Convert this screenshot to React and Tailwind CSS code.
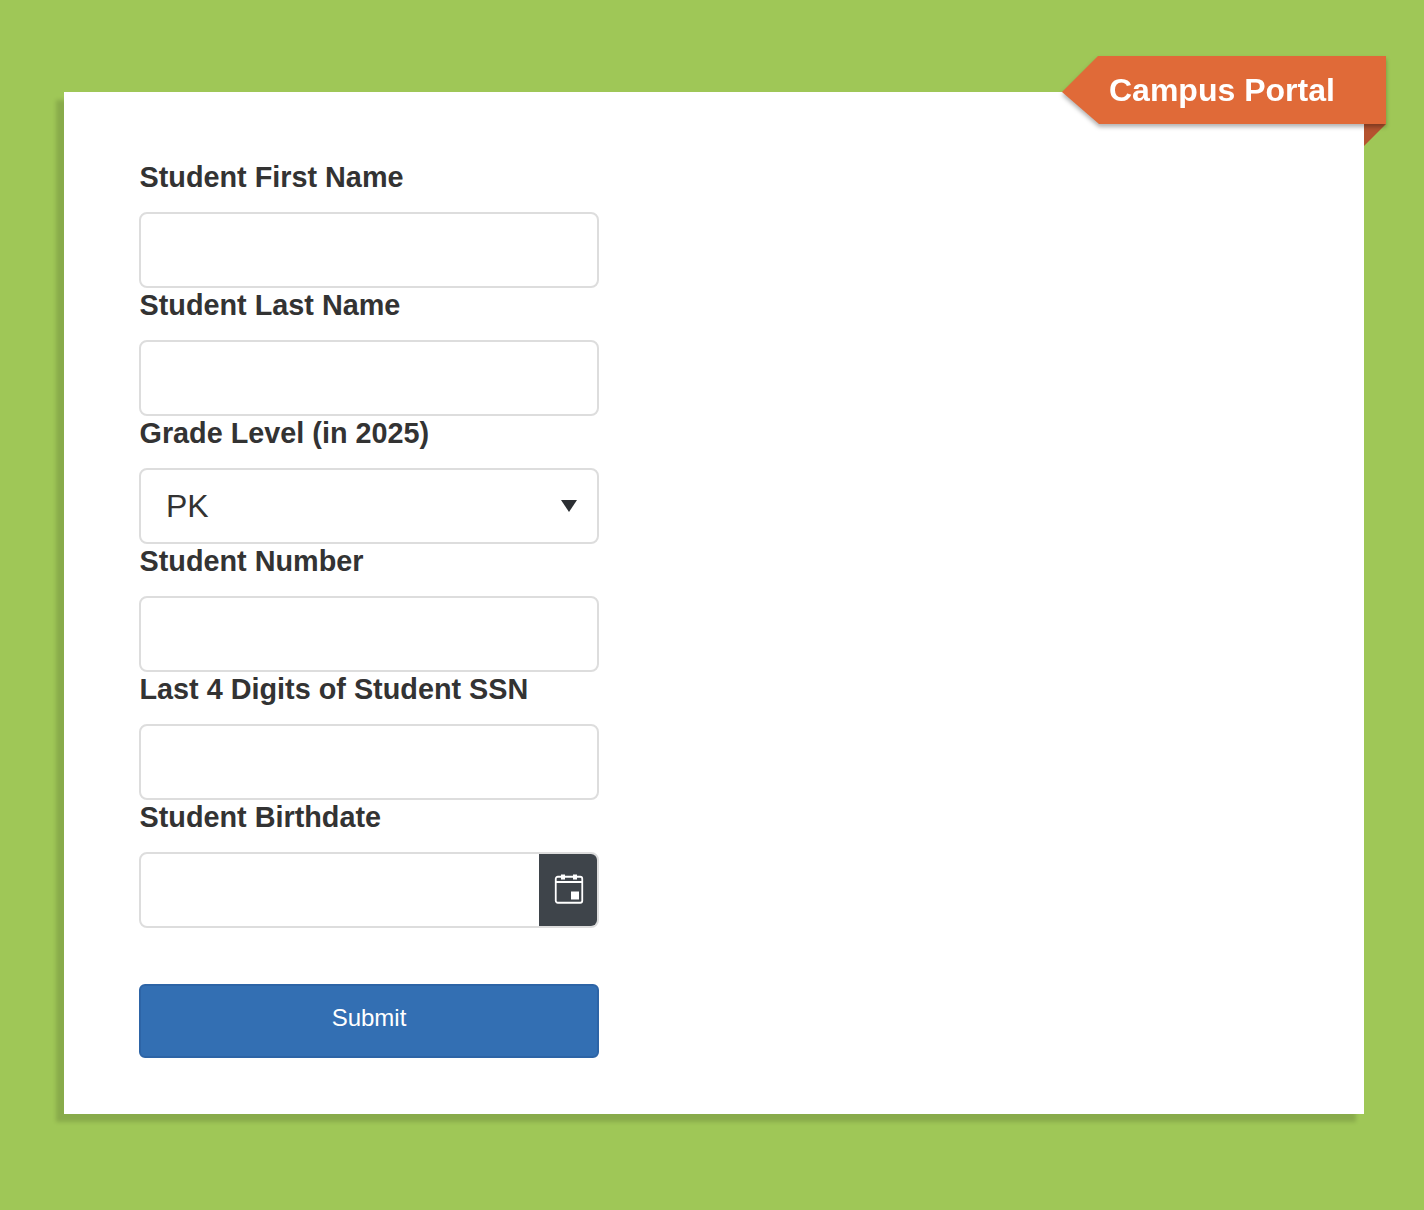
const labels = ["Student First Name", "Student Last Name"];

function Label({ children }) {
  return (
    <label className="block h-[52px] pl-[0.5px] text-[28.8px] leading-[34px] font-bold text-[#333333]">
      {children}
    </label>
  );
}

function TextInput() {
  return <input type="text" className="block w-full h-[76px] rounded-[8px] border-2 border-[#dddddd] bg-white outline-none" />;
}

function CalendarIcon() {
  return (
    <svg className="block mb-[2px] ml-[2px]" width="30" height="30" viewBox="0 0 30 30" fill="none">
      <rect x="1.75" y="2.75" width="26.5" height="26" rx="2" stroke="white" strokeWidth="1.8" />
      <path d="M1.75 8H28.25" stroke="white" strokeWidth="1.8" />
      <rect x="7" y="0.5" width="4" height="5" fill="white" />
      <rect x="19" y="0.5" width="4" height="5" fill="white" />
      <rect x="17" y="17.5" width="8" height="8" fill="white" />
    </svg>
  );
}

export default function App() {
  return (
    <div className="min-h-[1210px] bg-[#9fc757] pt-[92px] pl-16 font-['Liberation_Sans',Arial,sans-serif]">
      <div className="relative w-[1300px] h-[1022px] bg-white pl-[75px] pt-[68px] shadow-[-8px_8px_4px_rgba(0,0,0,0.14)]">
        <div className="w-[460px]">
          {labels.map((l) => (
            <div key={l}>
              <Label>{l}</Label>
              <TextInput />
            </div>
          ))}
          <Label>Grade Level (in 2025)</Label>
          <div className="relative flex items-center h-[76px] rounded-[8px] border-2 border-[#dddddd] bg-white pl-[25px] text-[32px] text-[#333333]">
            <span>PK</span>
            <svg className="absolute right-[20px] top-[30px]" width="16" height="12" viewBox="0 0 16 12">
              <path d="M0 0H16L8 12Z" fill="#2b2f33" />
            </svg>
          </div>
          <Label>Student Number</Label>
          <TextInput />
          <Label>Last 4 Digits of Student SSN</Label>
          <TextInput />
          <Label>Student Birthdate</Label>
          <div className="flex h-[76px] rounded-[8px] border-2 border-[#dddddd] bg-white overflow-hidden">
            <div className="flex-1" />
            <div className="w-[58px] bg-[#3e444a] flex items-center justify-center">
              <CalendarIcon />
            </div>
          </div>
          <button className="mt-[56px] block w-full h-[74px] rounded-[6px] border-2 border-[#2d64a6] bg-[#336fb3] text-white text-[24px] pb-[6px]">
            Submit
          </button>
        </div>

        <div className="absolute left-[1300px] top-[32px] w-[22px] h-[22px] bg-[#b5532f] [clip-path:polygon(0_0,100%_0,0_100%)]" />
        <div className="absolute left-[998px] top-[-36px] w-[324px] h-[68px] drop-shadow-[0_3px_2px_rgba(0,0,0,0.3)]">
          <div className="h-full bg-[#e06a38] [clip-path:polygon(36px_0,100%_0,100%_100%,37px_100%,0_36px)] flex items-center pl-[47px] text-white font-bold text-[32px]">
            Campus Portal
          </div>
        </div>
      </div>
    </div>
  );
}
